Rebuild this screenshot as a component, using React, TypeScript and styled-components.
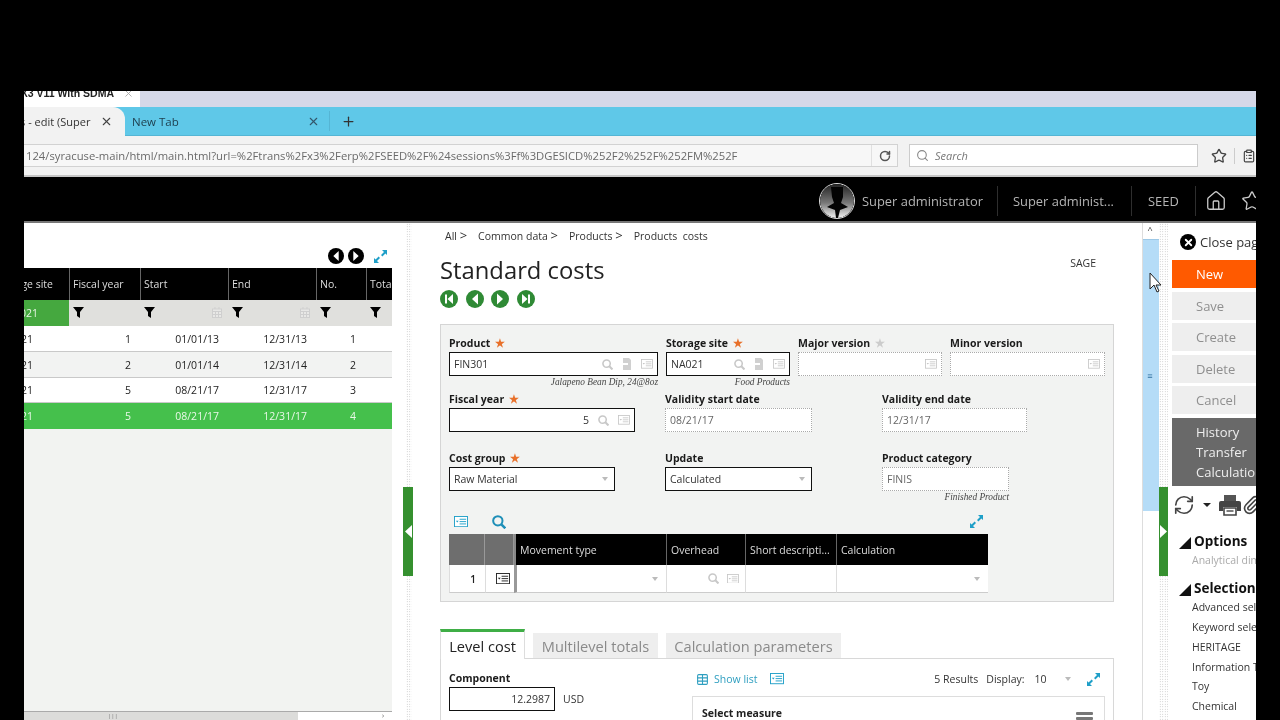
import React from "react";
import styled, { createGlobalStyle } from "styled-components";
import { Search, RotateCw, RefreshCw, Star, Paperclip, Plus, X, Home, Table, ClipboardList } from "lucide-react";

const Global = createGlobalStyle`
  html, body { margin: 0; padding: 0; background: #000; }
  * { box-sizing: border-box; }
  body { font-family: "Open Sans", "Noto Sans", "Liberation Sans", sans-serif; }
`;

const Screen = styled.div`
  width: 1280px; height: 720px; background: #000; padding: 91px 24px 0; overflow: hidden;
`;
const Win = styled.div`
  position: relative; width: 1232px; height: 629px; overflow: hidden; display: flex; flex-direction: column; background: #fff;
  font-size: 11px; color: #222; filter: blur(0.3px);
`;
const TitleStrip = styled.div`height: 16px; background: #d5d8e8; display: flex; flex: none;`;
const TitleTab = styled.div`
  width: 116px; background: #fff; display: flex; align-items: center; justify-content: flex-end; gap: 8.5px; padding: 0 6.5px 12px 0;
  font: bold 10.5px "Liberation Sans", sans-serif; color: #222; white-space: nowrap; overflow: hidden;
`;
const TitleText = styled.span`flex: none;`;
const TabBar = styled.div`height: 29px; background: #5fc8e8; display: flex; align-items: center; flex: none; border-bottom: 1px solid #55b5d4;`;
const ActiveTab = styled.div`
  width: 101px; height: 29px; background: #f2f2f2; border-top-right-radius: 12px; display: flex; align-items: center; justify-content: flex-end;
  padding-right: 12.5px; gap: 9px; white-space: nowrap; overflow: hidden; color: #333; font-size: 11px;
`;
const TabText = styled.span`flex: none;`;
const NewTab = styled.div`
  width: 201px; padding-left: 7px; display: flex; align-items: center; justify-content: space-between; color: #1d3d4c; font-size: 11.5px; padding-right: 6.5px; flex: none;
`;
const TabDivider = styled.div`width: 1px; height: 20px; background: #55b5d4; margin: 0 11px 0 3px; flex: none;`;
const UrlBar = styled.div`
  height: 41px; background: #f2f2f2; border-bottom: 2px solid #c6c6c6; display: flex; align-items: center; flex: none;
`;
const UrlField = styled.div`
  width: 874px; height: 23px; background: #f7f7f7; border: 1px solid #d2d2d2; border-left: 0; display: flex; align-items: center;
  padding-left: 2px; color: #6a6a6a; font-size: 11.25px; white-space: nowrap; overflow: hidden; flex: none;
`;
const UrlText = styled.span`flex: 1; overflow: hidden;`;
const Reload = styled.div`
  width: 26px; height: 21px; border-left: 1px solid #e0e0e0; display: flex; align-items: center; justify-content: center; color: #555; flex: none;
`;
const SearchField = styled.div`
  width: 289px; height: 23px; margin-left: 11px; background: #fff; border: 1px solid #ccc; display: flex; align-items: center; gap: 6px; padding-left: 6px;
  font-style: italic; color: #777; font-size: 11px; flex: none;
`;
const BarIcons = styled.div`display: flex; align-items: center; margin-left: 13px; color: #444; gap: 7px; flex: none;`;
const BarDivider = styled.div`width: 1px; height: 16px; background: #ccc;`;
const AppHeader = styled.div`
  height: 46px; background: #000; border-bottom: 2px solid #777; display: flex; align-items: center; padding: 4px 0 0 795px; flex: none; color: #b5b5b5; font-size: 12.9px; white-space: nowrap;
`;
const Avatar = styled.div`
  width: 36px; height: 36px; border-radius: 50%; border: 1px solid #ddd; overflow: hidden; flex: none; margin-right: 7px;
`;
const HeaderItem = styled.div<{ $w: number }>`width: ${p => p.$w}px; flex: none;`;
const HeaderDivider = styled.div<{ $mr?: number }>`width: 1px; height: 30px; background: #2e2e2e; flex: none; margin-right: ${p => p.$mr ?? 15}px;`;
const HomeIcon = styled(Home)`margin-right: 14px; flex: none;`;
const StarIcon = styled(Star)`flex: none;`;

const Content = styled.div`flex: 1; min-height: 0; display: flex;`;
const LeftPanel = styled.div`width: 368px; flex: none; display: flex; flex-direction: column; background: #f2f3f1;`;
const LeftTop = styled.div`
  height: 45px; background: #fff; display: flex; align-items: flex-end; justify-content: flex-end; gap: 4px; padding: 0 4.5px 4px 0; flex: none;
`;
const ExpandSlot = styled.span<{ $ml: number }>`display: flex; margin-left: ${p => p.$ml}px; flex: none;`;
const LeftGrid = styled.div<{ $bg?: string; $color?: string; $h: number; $line?: boolean }>`
  display: grid; grid-template-columns: 45px 71px 88px 88px 50px 26px; height: ${p => p.$h}px; flex: none;
  background: ${p => p.$bg ?? "#fff"}; color: ${p => p.$color ?? "#222"};
  border-bottom: ${p => (p.$line ? "1px solid #c9c9c9" : "0")};
`;
const HeadCell = styled.div<{ $clip?: boolean }>`
  display: flex; align-items: center; color: #ddd; font-size: 10.5px; white-space: nowrap; overflow: hidden;
  padding-left: ${p => (p.$clip ? 0 : 3)}px; justify-content: ${p => (p.$clip ? "flex-end" : "flex-start")};
  padding-right: ${p => (p.$clip ? 16 : 0)}px; border-left: ${p => (p.$clip ? 0 : "1px solid #666")};
`;
const FilterCell = styled.div<{ $green?: boolean }>`
  display: flex; align-items: center; justify-content: ${p => (p.$green ? "flex-end" : "space-between")};
  padding: ${p => (p.$green ? "0 31px 1px 0" : "0 6px 1px 4px")}; background: ${p => (p.$green ? "#45a83f" : "transparent")}; color: #e9f5e6; font-size: 10.5px; overflow: hidden; white-space: nowrap;
`;
const DataCell = styled.div<{ $pad: number }>`
  display: flex; align-items: center; justify-content: flex-end; padding-right: ${p => p.$pad}px; font-size: 10.5px; overflow: hidden; white-space: nowrap;
`;
const CellText = styled.span`flex: none;`;
const LeftFill = styled.div`flex: 1; background: #f2f3f1;`;
const LeftScroll = styled.div`height: 9px; flex: none; display: flex; border-top: 1px solid #aaa; background: #fff;`;
const LeftThumb = styled.div`width: 274px; background: #dcdcda; padding-left: 84px; color: #777; font-size: 6px; line-height: 8px;`;
const LeftArrow = styled.div`flex: 1; text-align: right; padding-right: 8px; color: #555; font-size: 7px; line-height: 8px;`;

const Splitter = styled.div<{ $ml: number; $w: number }>`
  width: ${p => p.$w}px; margin-left: ${p => p.$ml}px; flex: none; position: relative;
  background-image: radial-gradient(#bbb 0.7px, transparent 0.8px); background-size: 2.5px 2.5px;
`;
const SplitHandle = styled.div<{ $left: number; $w: number }>`
  position: absolute; left: ${p => p.$left}px; top: 264px; width: ${p => p.$w}px; height: 89px; background: #35902f; display: flex; align-items: center; justify-content: center;
`;

const Main = styled.div`width: 730px; flex: none; padding: 0 28px; background: #fff; overflow: hidden;`;
const Crumbs = styled.div`height: 27px; padding: 0 0 2px 5px; display: flex; align-items: center; gap: 11px; font-size: 10.5px; color: #333;`;
const Crumb = styled.span`white-space: nowrap;`;
const Sep = styled.span`font-size: 13px; line-height: 10px;`;
const TitleRow = styled.div`height: 40px; display: flex; align-items: center; justify-content: space-between;`;
const PageTitle = styled.h1`margin: 0; font-weight: 400; font-size: 23.8px; color: #222;`;
const Sage = styled.span`font-size: 10.5px; margin: 0 18px 14px 0; color: #333;`;
const NavRow = styled.div`height: 18px; display: flex; gap: 7.7px;`;
const FormPanel = styled.section`
  margin-top: 16px; height: 278px; background: #f2f3f2; border: 1px solid #d5d5d5; padding: 10px 8px 0; position: relative;
`;
const FieldRow = styled.div<{ $mt?: number }>`display: flex; margin-top: ${p => p.$mt ?? 0}px;`;
const Field = styled.div<{ $w: number; $ml?: number }>`width: ${p => p.$w}px; margin-left: ${p => p.$ml ?? 0}px; flex: none;`;
const Label = styled.div`height: 17px; padding-bottom: 2px; display: flex; align-items: center; gap: 5px; font-weight: 700; font-size: 10.5px; color: #1a1a1a; white-space: nowrap;`;
const Req = styled.span<{ $grey?: boolean }>`color: ${p => (p.$grey ? "#ccc" : "#e8702a")}; font-size: 11px;`;
const Input = styled.div<{ $dotted?: boolean; $right?: boolean }>`
  height: 24px; background: #fff; border: ${p => (p.$dotted ? "1px dotted #aaa" : "1px solid #111")}; display: flex; align-items: center; gap: 9px;
  padding: 0 4px; font-size: 10.5px; color: ${p => (p.$dotted ? "#666" : "#333")};
`;
const InputText = styled.span<{ $right?: boolean }>`flex: 1; white-space: nowrap; text-align: ${p => (p.$right ? "right" : "left")};`;
const Sub = styled.div`height: 12px; text-align: right; font: italic 9.3px/13px "Liberation Serif", serif; color: #444; white-space: nowrap;`;
const Caret = styled.span`width: 0; height: 0; border-left: 3.5px solid transparent; border-right: 3.5px solid transparent; border-top: 4px solid #bbb; flex: none; margin-right: 2px;`;
const GridTools = styled.div`height: 19px; margin-top: 9px; width: 539px; display: flex; align-items: center; gap: 24px; padding-left: 5px;`;
const ToolEnd = styled.div`margin-left: auto; margin-right: 4px; display: flex;`;
const LinesGrid = styled.div`
  display: grid; grid-template-columns: 36px 29px 152px 79px 91px 152px; width: 539px; margin-top: 3px;
`;
const GreyHead = styled.div`height: 31px; background: #6e6e6e; border-right: 1px solid #999;`;
const BlackHead = styled.div<{ $sep?: boolean }>`
  height: 31px; background: #000; color: #ddd; display: flex; align-items: center; padding-left: 4px; font-size: 10.5px; border-left: ${p => (p.$sep ? "2px solid #888" : "1px solid #666")}; white-space: nowrap; overflow: hidden;
`;
const LineCell = styled.div<{ $sep?: boolean; $pad?: number }>`
  height: 28px; background: #fff; border-bottom: 1px solid #ccc; border-left: ${p => (p.$sep ? "3px solid #999" : "1px solid #ddd")};
  display: flex; align-items: center; justify-content: flex-end; gap: 8px; padding-right: ${p => p.$pad ?? 6}px; font-size: 10px; font-weight: 600;
`;
const Tabs = styled.div`margin-top: 27px; height: 29px; display: flex; gap: 8px; align-items: flex-end;`;
const Tab = styled.div<{ $active?: boolean; $w: number }>`
  width: ${p => p.$w}px; height: ${p => (p.$active ? 30 : 25)}px; background: ${p => (p.$active ? "#fff" : "#eeeeee")}; color: ${p => (p.$active ? "#222" : "#8a8a8a")};
  border-top: ${p => (p.$active ? "3px solid #3fae46" : "0")}; border-left: ${p => (p.$active ? "1px solid #ddd" : "0")}; border-right: ${p => (p.$active ? "1px solid #ddd" : "0")};
  display: flex; align-items: center; justify-content: center; font-size: 14.6px; white-space: nowrap; margin-bottom: ${p => (p.$active ? -1 : 0)}px; position: relative;
`;
const TabPanel = styled.div`height: 80px; border: 1px solid #d8d8d8; display: flex; padding: 11px 8px 0;`;
const CompCol = styled.div`width: 243px; flex: none;`;
const AmountRow = styled.div`display: flex; align-items: center; gap: 8px; font-size: 10.5px; color: #333;`;
const Amount = styled.div`width: 106px; height: 24px; border: 1px solid #111; background: #fff; display: flex; align-items: center; justify-content: flex-end; padding-right: 4px;`;
const ListCol = styled.div`flex: 1; min-width: 0;`;
const ListBar = styled.div`height: 18px; display: flex; align-items: center; padding: 0 4.5px 0 4px; font-size: 10.5px; color: #333;`;
const ShowList = styled.span`color: #2f9fc0; display: flex; align-items: center; gap: 5px; margin-right: 13px;`;
const Results = styled.span`margin-left: auto;`;
const Display = styled.span`margin-left: 8px;`;
const DisplayVal = styled.span`margin-left: 10px; width: 30px;`;
const ListBox = styled.div`margin-top: 8px; height: 40px; border: 1px solid #ddd; border-bottom: 0; padding: 9px 11px 0 9px; display: flex; justify-content: space-between; font-weight: 700; font-size: 10.5px;`;
const Burger = styled.span`display: flex; flex-direction: column; gap: 2px; margin-top: 6px;`;
const BurgerLine = styled.span`width: 17px; height: 3px; background: #777; border-radius: 1px;`;

const VScroll = styled.div`width: 17px; flex: none; display: flex; flex-direction: column; border-left: 1px solid #ddd; background: #fff;`;
const VBtn = styled.div`height: 17px; flex: none; text-align: center; font-size: 9px; color: #333; border-bottom: 1px solid #9dc8e6; padding-right: 2px;`;
const VThumb = styled.div`height: 271px; background: #b5dcf7; display: flex; align-items: center; justify-content: center; color: #2f6f9f; font-size: 9px; font-weight: 700; padding-right: 2px;`;

const RightPanel = styled.div`width: 84px; margin-left: 4px; flex: none; overflow: hidden; background: #fff;`;
const CloseRow = styled.div`height: 37px; display: flex; align-items: center; gap: 4px; padding: 1px 0 0 8px; font-size: 13px; color: #333; white-space: nowrap;`;
const CloseDot = styled.span`width: 16px; height: 16px; border-radius: 50%; background: #000; color: #fff; display: flex; align-items: center; justify-content: center; flex: none;`;
const Actions = styled.div`display: flex; flex-direction: column; gap: 3.6px;`;
const ActionBtn = styled.div<{ $primary?: boolean }>`
  height: 28px; width: 100%; padding-left: 24px; display: flex; align-items: center; font-size: 13px;
  background: ${p => (p.$primary ? "#ff5a00" : "#eeeeee")}; color: ${p => (p.$primary ? "#fff" : "#8f8f8f")};
`;
const DarkGroup = styled.div`margin-top: 4px; background: #696969; color: #eee; padding: 4px 0 4px 24px; font-size: 13px; line-height: 20px; white-space: nowrap;`;
const ToolRow = styled.div`height: 38px; display: flex; align-items: center; padding-left: 1px; color: #444;`;
const SideCaret = styled.span`width: 0; height: 0; border-left: 4px solid transparent; border-right: 4px solid transparent; border-top: 4px solid #222; flex: none; margin: 0 7px 0 8px;`;
const ClipIcon = styled(Paperclip)`flex: none;`;
const SyncIcon = styled(RefreshCw)`flex: none;`;
const SideHead = styled.div<{ $mt: number }>`margin-top: ${p => p.$mt}px; height: 20px; display: flex; align-items: center; gap: 3px; padding-left: 7px; font-weight: 700; font-size: 13.5px; color: #111; white-space: nowrap;`;
const Tri = styled.span`width: 0; height: 0; border-left: 12px solid transparent; border-bottom: 12px solid #111; flex: none; margin-top: 3px;`;
const SideItem = styled.div<{ $muted?: boolean }>`padding-left: 20px; height: 19.8px; line-height: 19.8px; font-size: 10.5px; color: ${p => (p.$muted ? "#aaa" : "#333")}; white-space: nowrap;`;
const Cursor = styled.svg`position: absolute; left: 1125px; top: 181px;`;

const Funnel = () => (
  <svg width="11" height="11" viewBox="0 0 11 11"><path d="M0 0h11L7 5v6L4 9V5z" fill="#000" /></svg>
);
const Cal = () => (
  <svg width="10" height="11" viewBox="0 0 10 11" fill="none" stroke="#cfcfcf"><rect x=".5" y="2" width="9" height="8.5" fill="#e8e8e6" /><path d="M.5 4.5h9M3.5 4.5v6M6.5 4.5v6M.5 7.5h9M3 0v2M7 0v2" /></svg>
);
const Detail = ({ color = "#c4c4c4", size = 12 }: { color?: string; size?: number }) => (
  <svg width={size} height={size * 0.8} viewBox="0 0 15 12" fill="none" stroke={color} style={{ flex: "none" }}>
    <rect x=".5" y=".5" width="14" height="11" fill="#fff" /><path d="M6 3.5h7M6 6h7M6 8.5h7" /><path d="M2 5h3L3.5 7z" fill={color} stroke="none" />
  </svg>
);
const Mag = ({ color = "#c8c8c8", size = 11 }: { color?: string; size?: number }) => (
  <svg width={size} height={size} viewBox="0 0 12 12" fill="none" stroke={color} strokeWidth="1.7" style={{ flex: "none" }}><circle cx="5" cy="5" r="4" /><path d="M8 8l3.4 3.4" strokeWidth="2.2" /></svg>
);
const Docs = () => (
  <svg width="10" height="12" viewBox="0 0 10 12" style={{ flex: "none" }}><path d="M1 0h6l2 2v10H1z" fill="#d0d0d0" /><path d="M0 5h6v2H0z" fill="#fff" /></svg>
);
const Expand = ({ size = 15 }: { size?: number }) => (
  <svg width={size} height={size} viewBox="0 0 15 15" fill="#1f9fc8" stroke="none" style={{ flex: "none" }}>
    <path d="M9 1h5v5l-1.6-1.6-3 3-1.4-1.4 3-3z" /><path d="M6 14H1V9l1.6 1.6 3-3 1.4 1.4-3 3z" />
  </svg>
);
const CircleNav = ({ kind, color, size }: { kind: "first" | "prev" | "next" | "last"; color: string; size: number }) => (
  <svg width={size} height={size} viewBox="0 0 18 18" style={{ flex: "none" }}>
    <circle cx="9" cy="9" r="9" fill={color} />
    {kind === "first" && <path d="M5 4.5h2v9H5zM13 4v10L7.5 9z" fill="#fff" />}
    {kind === "prev" && <path d="M12 3.5v11L6 9z" fill="#fff" />}
    {kind === "next" && <path d="M6 3.5v11L12 9z" fill="#fff" />}
    {kind === "last" && <path d="M11 4.5h2v9h-2zM5 4v10l5.5-5z" fill="#fff" />}
  </svg>
);
const Arrow = ({ dir }: { dir: "l" | "r" }) => (
  <svg width="7" height="13" viewBox="0 0 7 13"><path d={dir === "l" ? "M7 0v13L0 6.5z" : "M0 0v13l7-6.5z"} fill="#fff" /></svg>
);
const Silhouette = () => (
  <svg width="34" height="34" viewBox="0 0 34 34">
    <defs><linearGradient id="av" x1="0" y1="0" x2="0" y2="1"><stop offset="0" stopColor="#222" /><stop offset="0.55" stopColor="#777" /><stop offset="1" stopColor="#f2f2f2" /></linearGradient></defs>
    <circle cx="17" cy="17" r="17" fill="url(#av)" />
    <path d="M11 3h12v10l-2 6 7 4-8 3-2 8h-2l-1-8-8-3 7-4-2-6z" fill="#030303" />
  </svg>
);
const PrinterSolid = () => (
  <svg width="24" height="22" viewBox="0 0 24 22" style={{ flex: "none" }}>
    <path d="M6 1h12v6H6z" fill="#555" />
    <path d="M3 7h18a2 2 0 0 1 2 2v8h-4v-4H5v4H1V9a2 2 0 0 1 2-2z" fill="#444" />
    <path d="M6 14h12v7H6z" fill="#fff" stroke="#444" strokeWidth="1.6" />
    <path d="M8.5 17h7" stroke="#444" strokeWidth="1.4" />
  </svg>
);

const columns = ["Storage site", "Fiscal year", "Start", "End", "No.", "Total"];
const rows = [
  { y: "1", s: "01/01/13", e: "12/31/13", n: "1" },
  { y: "2", s: "01/01/14", e: "12/31/14", n: "2", bg: "#f2f3f2" },
  { y: "5", s: "08/21/17", e: "12/31/17", n: "3" },
  { y: "5", s: "08/21/17", e: "12/31/17", n: "4", bg: "#45c04c", color: "#eaf8e8" },
];

export default function App() {
  return (
    <Screen>
      <Global />
      <Win>
        <TitleStrip>
          <TitleTab><TitleText>X3 V11 With SDMA</TitleText><X size={11} color="#aaa" style={{ flex: "none" }} /></TitleTab>
        </TitleStrip>
        <TabBar>
          <ActiveTab><TabText>Standard costs - edit (Super</TabText><X size={13} color="#444" style={{ flex: "none" }} /></ActiveTab>
          <NewTab><TabText>New Tab</TabText><X size={13} color="#33566a" /></NewTab>
          <TabDivider />
          <Plus size={15} color="#333" />
        </TabBar>
        <UrlBar>
          <UrlField>
            <UrlText>124/syracuse-main/html/main.html?url=%2Ftrans%2Fx3%2Ferp%2FSEED%2F%24sessions%3Ff%3DGESICD%252F2%252F%252FM%252F</UrlText>
            <Reload><RotateCw size={12} strokeWidth={3} /></Reload>
          </UrlField>
          <SearchField><Search size={13} color="#888" />Search</SearchField>
          <BarIcons>
            <Star size={16} strokeWidth={2} />
            <BarDivider />
            <ClipboardList size={14} />
          </BarIcons>
        </UrlBar>
        <AppHeader>
          <Avatar><Silhouette /></Avatar>
          <HeaderItem $w={135}>Super administrator</HeaderItem>
          <HeaderDivider />
          <HeaderItem $w={118}>Super administ...</HeaderItem>
          <HeaderDivider $mr={16} />
          <HeaderItem $w={47}>SEED</HeaderItem>
          <HeaderDivider $mr={9} />
          <HomeIcon size={22} color="#ccc" strokeWidth={1.4} />
          <StarIcon size={22} color="#ccc" strokeWidth={1.4} />
        </AppHeader>
        <Content>
          <LeftPanel>
            <LeftTop>
              <CircleNav kind="prev" color="#000" size={16} />
              <CircleNav kind="next" color="#000" size={16} />
              <ExpandSlot $ml={4.5}><Expand /></ExpandSlot>
            </LeftTop>
            <LeftGrid $h={32} $bg="#000">
              {columns.map((c, i) => <HeadCell key={c} $clip={i === 0}>{c}</HeadCell>)}
            </LeftGrid>
            <LeftGrid $h={26} $bg="#e0e0dd">
              <FilterCell $green><CellText>NA021</CellText></FilterCell>
              <FilterCell><Funnel /></FilterCell>
              <FilterCell><Funnel /><Cal /></FilterCell>
              <FilterCell><Funnel /><Cal /></FilterCell>
              <FilterCell><Funnel /></FilterCell>
              <FilterCell><Funnel /></FilterCell>
            </LeftGrid>
            {rows.map((r, i) => (
              <LeftGrid key={i} $h={i === 2 ? 25 : 26} $bg={r.bg} $color={r.color} $line={i < 3}>
                <DataCell $pad={36}><CellText>NA021</CellText></DataCell>
                <DataCell $pad={9}>{r.y}</DataCell>
                <DataCell $pad={9}>{r.s}</DataCell>
                <DataCell $pad={9}>{r.e}</DataCell>
                <DataCell $pad={10}>{r.n}</DataCell>
                <DataCell $pad={0} />
              </LeftGrid>
            ))}
            <LeftFill />
            <LeftScroll>
              <LeftThumb>|||</LeftThumb>
              <LeftArrow>›</LeftArrow>
            </LeftScroll>
          </LeftPanel>
          <Splitter $ml={14} $w={6}>
            <SplitHandle $left={-3} $w={10}><Arrow dir="l" /></SplitHandle>
          </Splitter>
          <Main>
            <Crumbs>
              <Crumb>All <Sep>&gt;</Sep></Crumb>
              <Crumb>Common data <Sep>&gt;</Sep></Crumb>
              <Crumb>Products <Sep>&gt;</Sep></Crumb>
              <Crumb>Products&nbsp; costs</Crumb>
            </Crumbs>
            <TitleRow><PageTitle>Standard costs</PageTitle><Sage>SAGE</Sage></TitleRow>
            <NavRow>
              <CircleNav kind="first" color="#2f8a35" size={18} />
              <CircleNav kind="prev" color="#2f8a35" size={18} />
              <CircleNav kind="next" color="#2f8a35" size={18} />
              <CircleNav kind="last" color="#2f8a35" size={18} />
            </NavRow>
            <FormPanel>
              <FieldRow>
                <Field $w={209}>
                  <Label>Product <Req>★</Req></Label>
                  <Input><InputText>FIN301</InputText><Mag /><Docs /><Detail /></Input>
                  <Sub>Jalapeno Bean Dip, 24@8oz</Sub>
                </Field>
                <Field $w={124} $ml={8}>
                  <Label>Storage site <Req>★</Req></Label>
                  <Input><InputText>NA021</InputText><Mag /><Docs /><Detail /></Input>
                  <Sub>Food Products</Sub>
                </Field>
                <Field $w={144} $ml={8}>
                  <Label>Major version <Req $grey>★</Req></Label>
                  <Input $dotted><InputText /><Detail /></Input>
                </Field>
                <Field $w={155} $ml={8}>
                  <Label>Minor version</Label>
                  <Input $dotted><InputText /><Detail /></Input>
                </Field>
              </FieldRow>
              <FieldRow $mt={3}>
                <Field $w={186}>
                  <Label>Fiscal year <Req>★</Req></Label>
                  <Input><InputText $right>5</InputText><Mag /><Detail /></Input>
                </Field>
                <Field $w={147} $ml={30}>
                  <Label>Validity start date</Label>
                  <Input $dotted><InputText>08/21/17</InputText></Input>
                </Field>
                <Field $w={145} $ml={70}>
                  <Label>Validity end date</Label>
                  <Input $dotted><InputText>12/31/17</InputText></Input>
                </Field>
              </FieldRow>
              <FieldRow $mt={18}>
                <Field $w={166}>
                  <Label>Cost group <Req>★</Req></Label>
                  <Input><InputText>Raw Material</InputText><Caret /></Input>
                </Field>
                <Field $w={147} $ml={50}>
                  <Label>Update</Label>
                  <Input><InputText>Calculated</InputText><Caret /></Input>
                </Field>
                <Field $w={127} $ml={70}>
                  <Label>Product category</Label>
                  <Input $dotted><InputText>FINIS</InputText></Input>
                  <Sub>Finished Product</Sub>
                </Field>
              </FieldRow>
              <GridTools>
                <Detail color="#1f9fc8" size={14} />
                <Mag color="#1f8fb8" size={14} />
                <ToolEnd><Expand /></ToolEnd>
              </GridTools>
              <LinesGrid>
                <GreyHead />
                <GreyHead />
                <BlackHead $sep>Movement type</BlackHead>
                <BlackHead>Overhead</BlackHead>
                <BlackHead>Short descripti...</BlackHead>
                <BlackHead>Calculation</BlackHead>
                <LineCell $pad={9}>1</LineCell>
                <LineCell $pad={4}><Detail color="#222" size={14} /></LineCell>
                <LineCell $sep><Caret /></LineCell>
                <LineCell><Mag /><Detail /></LineCell>
                <LineCell />
                <LineCell><Caret /></LineCell>
              </LinesGrid>
            </FormPanel>
            <Tabs>
              <Tab $active $w={85}>Level cost</Tab>
              <Tab $w={125}>Multilevel totals</Tab>
              <Tab $w={175}>Calculation parameters</Tab>
            </Tabs>
            <TabPanel>
              <CompCol>
                <Label>Component</Label>
                <AmountRow><Amount>12.2987</Amount>USD</AmountRow>
              </CompCol>
              <ListCol>
                <ListBar>
                  <ShowList><Table size={13} />Show list</ShowList>
                  <Detail color="#1f9fc8" size={14} />
                  <Results>5 Results</Results>
                  <Display>Display:</Display>
                  <DisplayVal>10</DisplayVal>
                  <Caret />
                  <ExpandSlot $ml={13}><Expand /></ExpandSlot>
                </ListBar>
                <ListBox>Select measure<Burger><BurgerLine /><BurgerLine /></Burger></ListBox>
              </ListCol>
            </TabPanel>
          </Main>
          <VScroll>
            <VBtn>^</VBtn>
            <VThumb>≡</VThumb>
          </VScroll>
          <Splitter $ml={0} $w={9}>
            <SplitHandle $left={0} $w={9}><Arrow dir="r" /></SplitHandle>
          </Splitter>
          <RightPanel>
            <CloseRow><CloseDot><X size={11} strokeWidth={4} /></CloseDot>Close page</CloseRow>
            <Actions>
              <ActionBtn $primary>New</ActionBtn>
              <ActionBtn>Save</ActionBtn>
              <ActionBtn>Create</ActionBtn>
              <ActionBtn>Delete</ActionBtn>
              <ActionBtn>Cancel</ActionBtn>
            </Actions>
            <DarkGroup>History<br />Transfer<br />Calculation</DarkGroup>
            <ToolRow>
              <SyncIcon size={22} strokeWidth={1.8} />
              <SideCaret />
              <PrinterSolid />
              <ClipIcon size={20} />
            </ToolRow>
            <SideHead $mt={7}><Tri />Options</SideHead>
            <SideItem $muted>Analytical dimensions</SideItem>
            <SideHead $mt={7}><Tri />Selection</SideHead>
            <SideItem>Advanced selection</SideItem>
            <SideItem>Keyword selection</SideItem>
            <SideItem>HERITAGE</SideItem>
            <SideItem>Information Technology</SideItem>
            <SideItem>Toy</SideItem>
            <SideItem>Chemical</SideItem>
          </RightPanel>
        </Content>
        <Cursor width="13" height="21" viewBox="0 0 13 21"><path d="M1 1v16l4-4 3 7 2-1-3-6h5z" fill="#fff" stroke="#222" strokeWidth="1" /></Cursor>
      </Win>
    </Screen>
  );
}
